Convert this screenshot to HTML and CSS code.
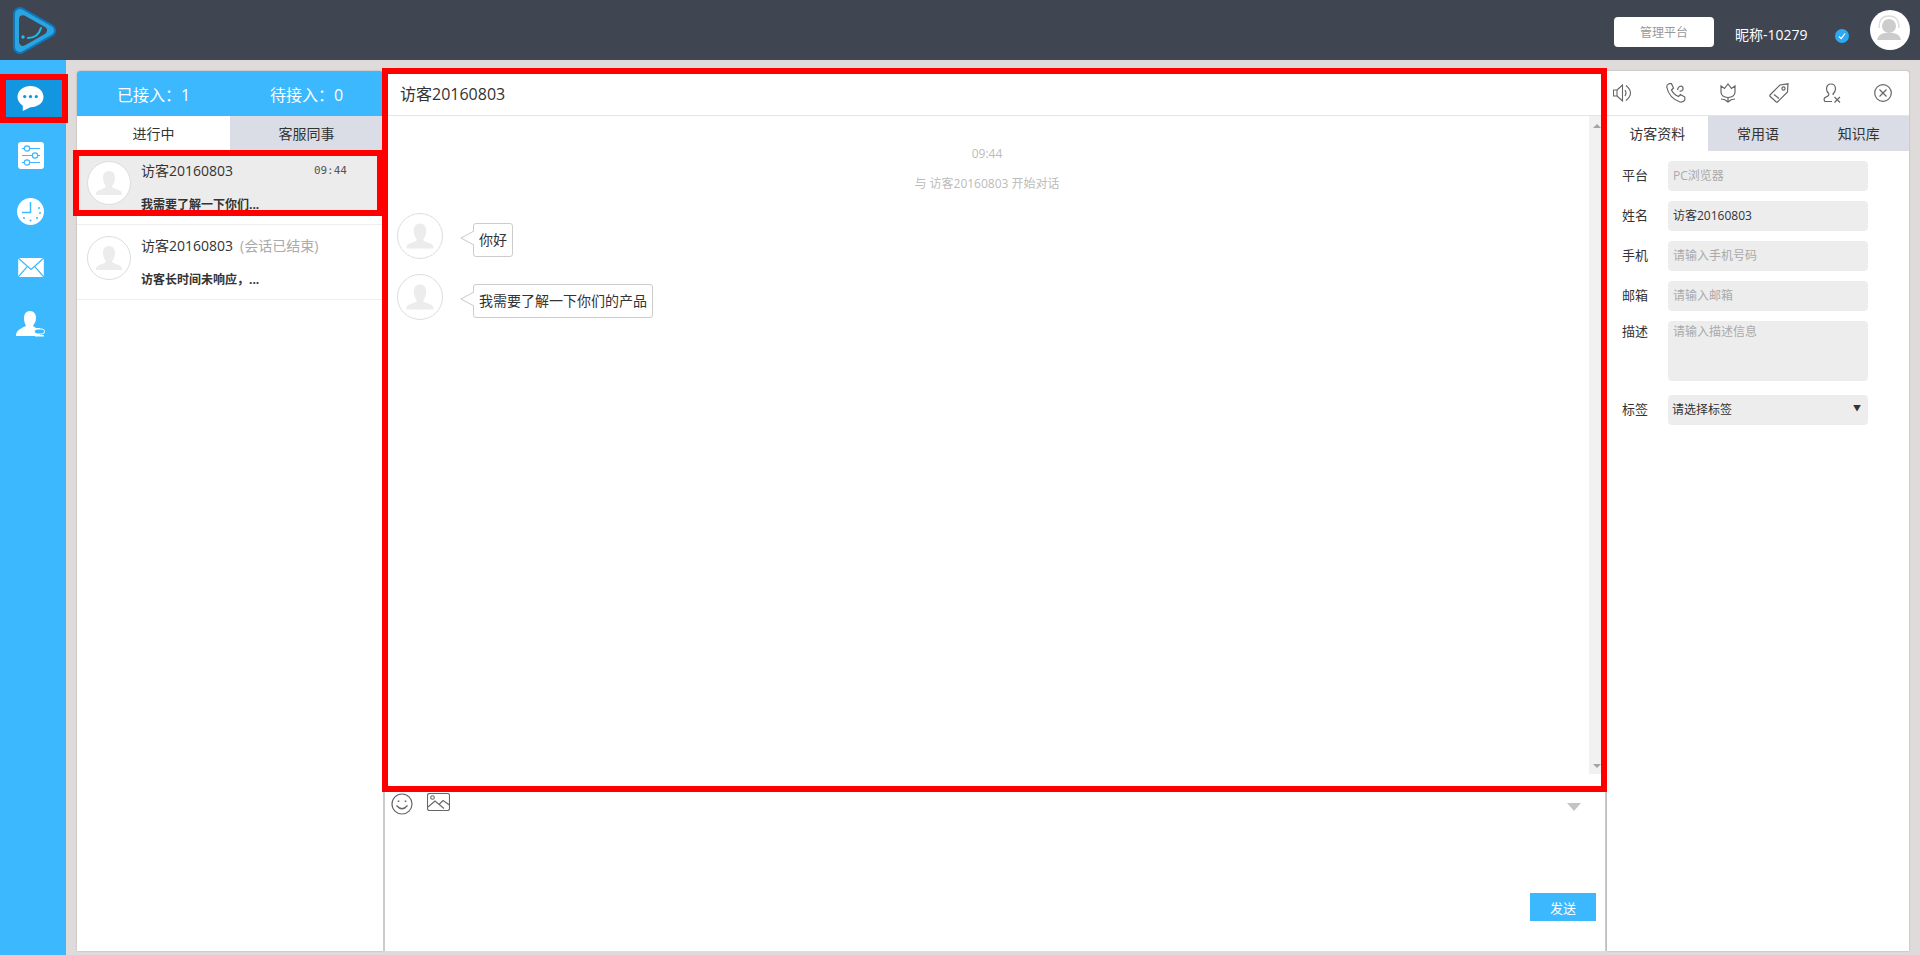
FILE: index.html
```html
<!DOCTYPE html>
<html lang="zh-CN">
<head>
    <meta charset="UTF-8">
    <title>客服工作台</title>
    <link rel="stylesheet" href="styles.css">
</head>
<body>
    <header class="topbar">
        <svg class="logo" width="46" height="50" viewBox="0 0 46 50">
            <path d="M9 9 L38 25.500 L9 42Z" fill="#0f75bc" stroke="#0f75bc" stroke-width="14" stroke-linejoin="round"/>
            <path d="M9 9 L38 25.500 L9 42Z" fill="#2aa5e0" stroke="#2aa5e0" stroke-width="10" stroke-linejoin="round"/>
            <path d="M12 14.200 L31.900 25.500 L12 36.800Z" fill="#3f4551" stroke="#3f4551" stroke-width="8" stroke-linejoin="round"/>
            <circle cx="12" cy="32" r="1.700" fill="#1cc0ee"/>
            <path d="M17 33 Q27 33 30 23" fill="none" stroke="#1cc0ee" stroke-width="2" stroke-linecap="round"/>
        </svg>
        <div class="topbar-right">
            <button class="admin-btn">管理平台</button>
            <span class="nickname">昵称-10279</span>
            <span class="status-dot">
                <svg width="10" height="10" viewBox="0 0 10 10"><path d="M2 5.500 L4.200 7.500 L8 2.500" fill="none" stroke="#fff" stroke-width="1.200"/></svg>
            </span>
            <span class="top-avatar">
                <svg width="40" height="40" viewBox="0 0 40 40">
                    <circle cx="19" cy="16" r="7" fill="#ccc"/>
                    <path d="M7 30 Q8 24 15 23 L23 23 Q30 24 31 30Z" fill="#ccc"/>
                    <path d="M9 18 Q9 6 19 6 Q29 6 29 18" fill="none" stroke="#ddd" stroke-width="1.500"/>
                </svg>
            </span>
        </div>
    </header>

    <div class="main">
        <nav class="sidenav">
            <a class="nav-item active">
                <svg width="27" height="27" viewBox="0 0 28 28">
                    <path d="M14 1 C21 1 27.500 5.500 27.500 12.500 C27.500 19 21 23 14 23 L6 27 L6 21.500 C3 19.500 .5 16.500 .5 12.500 C.5 5.500 7 1 14 1Z" fill="#fff"/>
                    <circle cx="8" cy="12" r="1.700" fill="#1296e0"/><circle cx="14" cy="12" r="1.700" fill="#1296e0"/><circle cx="20" cy="12" r="1.700" fill="#1296e0"/>
                </svg>
            </a>
            <a class="nav-item">
                <svg width="26" height="27" viewBox="0 0 26 27">
                    <rect width="26" height="27" rx="3" fill="#fff"/>
                    <g stroke="#3cb8ff" stroke-width="1.200" fill="#fff">
                        <path d="M4 6.500H22M4 13.500H22M4 20.500H22"/>
                        <circle cx="9" cy="6.500" r="2.700"/><circle cx="17" cy="13.500" r="2.700"/><circle cx="9" cy="20.500" r="2.700"/>
                    </g>
                </svg>
            </a>
            <a class="nav-item">
                <svg width="27" height="27" viewBox="0 0 27 27">
                    <circle cx="13.500" cy="13.500" r="13.500" fill="#fff"/>
                    <path d="M13.500 4V14.500H5" fill="none" stroke="#3cb8ff" stroke-width="1.500"/>
                    <g fill="#3cb8ff"><circle cx="22" cy="10" r="1"/><circle cx="23" cy="15" r="1"/><circle cx="20" cy="20" r="1"/><circle cx="13.500" cy="22.500" r="1"/><circle cx="7" cy="20" r="1"/></g>
                </svg>
            </a>
            <a class="nav-item">
                <svg width="26" height="19" viewBox="0 0 27 20">
                    <path d="M0 0H27V20H0Z" fill="#fff"/>
                    <path d="M0 0L13.500 12L27 0M0 20L9.500 9M27 20L17.500 9" fill="none" stroke="#3cb8ff" stroke-width="1.300"/>
                </svg>
            </a>
            <a class="nav-item">
                <svg width="29" height="26" viewBox="0 0 29 26">
                    <path d="M14 0 C18 0 20 3 20 7 C20 11 18 13 17 15 L20 17 L24 17 L24 25 L0 25 C0 20 3 18 10 15 C9 13 8 11 8 7 C8 3 10 0 14 0Z" fill="#fff"/>
                    <rect x="18.500" y="18" width="10" height="5" rx="2.500" fill="#3cb8ff" stroke="#fff" stroke-width="1"/>
                    <rect x="19" y="24" width="9" height="1.500" fill="#fff"/>
                </svg>
            </a>
        </nav>

        <section class="list-panel">
            <div class="list-head">
                <span>已接入：1</span>
                <span>待接入：0</span>
            </div>
            <div class="list-tabs">
                <div class="list-tab current">进行中</div>
                <div class="list-tab">客服同事</div>
            </div>
            <div class="visitor current">
                <span class="avatar">
                    <svg width="42" height="42" viewBox="0 0 42 42"><path d="M21 9 C25.500 9 27 12.500 27 16 C27 20 25 23 24 24.500 C24 27 33 27 34 31 L34 33 L8 33 L8 31 C9 27 18 27 18 24.500 C17 23 15 20 15 16 C15 12.500 16.500 9 21 9Z" fill="#ececec"/></svg>
                </span>
                <div class="visitor-body">
                    <div class="visitor-top">
                        <span class="visitor-name">访客20160803</span>
                        <span class="visitor-time">09:44</span>
                    </div>
                    <div class="visitor-msg">我需要了解一下你们...</div>
                </div>
            </div>
            <div class="visitor">
                <span class="avatar">
                    <svg width="42" height="42" viewBox="0 0 42 42"><path d="M21 9 C25.500 9 27 12.500 27 16 C27 20 25 23 24 24.500 C24 27 33 27 34 31 L34 33 L8 33 L8 31 C9 27 18 27 18 24.500 C17 23 15 20 15 16 C15 12.500 16.500 9 21 9Z" fill="#ececec"/></svg>
                </span>
                <div class="visitor-body">
                    <div class="visitor-top">
                        <span class="visitor-name">访客20160803</span>
                        <span class="visitor-ended">(会话已结束)</span>
                    </div>
                    <div class="visitor-msg">访客长时间未响应，...</div>
                </div>
            </div>
        </section>

        <section class="chat-panel">
            <div class="chat-title">访客20160803</div>
            <div class="chat-log">
                <div class="messages">
                    <div class="msg-time">09:44</div>
                    <div class="msg-time start">与 访客20160803 开始对话</div>
                    <div class="msg">
                        <span class="avatar big">
                            <svg width="44" height="44" viewBox="0 0 42 42"><path d="M21 9 C25.500 9 27 12.500 27 16 C27 20 25 23 24 24.500 C24 27 33 27 34 31 L34 33 L8 33 L8 31 C9 27 18 27 18 24.500 C17 23 15 20 15 16 C15 12.500 16.500 9 21 9Z" fill="#ececec"/></svg>
                        </span>
                        <div class="bubble">你好</div>
                    </div>
                    <div class="msg">
                        <span class="avatar big">
                            <svg width="44" height="44" viewBox="0 0 42 42"><path d="M21 9 C25.500 9 27 12.500 27 16 C27 20 25 23 24 24.500 C24 27 33 27 34 31 L34 33 L8 33 L8 31 C9 27 18 27 18 24.500 C17 23 15 20 15 16 C15 12.500 16.500 9 21 9Z" fill="#ececec"/></svg>
                        </span>
                        <div class="bubble">我需要了解一下你们的产品</div>
                    </div>
                </div>
                <div class="scrollbar">
                    <span class="arrow-up"></span>
                    <span class="arrow-down"></span>
                </div>
            </div>
            <div class="composer">
                <div class="composer-tools">
                    <svg width="22" height="22" viewBox="0 0 22 22" fill="none" stroke="#666" stroke-width="1.200">
                        <circle cx="11" cy="11" r="10"/>
                        <path d="M5.500 12.500 Q11 19 16.500 12.500" stroke-width="1.300"/>
                        <path d="M7.500 7.500V9M14.500 7.500V9" stroke-width="1.600"/>
                    </svg>
                    <svg width="23" height="19" viewBox="0 0 23 19" fill="none" stroke="#666" stroke-width="1.100">
                        <rect x=".5" y=".5" width="22" height="17" rx="2"/>
                        <circle cx="5.500" cy="4.500" r="1.800"/>
                        <path d="M1 14 L8 8 L17 15.500 M12 11.500 L16 7.500 L22.500 12"/>
                    </svg>
                    <span class="composer-toggle"></span>
                </div>
                <div class="composer-foot">
                    <button class="send-btn">发送</button>
                </div>
            </div>
        </section>

        <aside class="info-panel">
            <div class="tool-row">
                <svg width="20" height="18" viewBox="0 0 20 18" fill="none" stroke="#666" stroke-width="1.100"><path d="M.5 6H4V12H.5Z"/><path d="M4 6L9.500 1V17L4 12"/><path d="M12 6Q14 9 12 12M13 1.500Q22 9 13 16.500"/></svg>
                <svg width="20" height="20" viewBox="0 0 20 20" fill="none" stroke="#666" stroke-width="1.200"><path d="M3 .7 L5.500 .7 L7.500 5 L5.500 7 Q7 11 12.500 13.500 L14.500 11.500 L18.800 14 L18.800 17 Q17.500 19.500 14 19 Q3 15 .7 4 Q.7 1.500 3 .7Z"/><path d="M11.500 7 Q12 3.500 15 3 Q17.500 3.500 17 6.500 Q16 8.500 13.500 8"/></svg>
                <svg width="16" height="20" viewBox="0 0 16 20" fill="none" stroke="#666" stroke-width="1.200"><path d="M1 3 L4.500 5.500 L8 1 L11.500 5.500 L15 3 L15 9 Q15 14 8 14.500 Q1 14 1 9Z"/><path d="M8 14.500V19M1 16 Q5 16 8 19 Q11 16 15 16"/></svg>
                <svg width="20" height="20" viewBox="0 0 20 20" fill="none" stroke="#666" stroke-width="1.200"><path d="M1 12 L11 2 L19 .8 L18.500 9 L8.500 19 Q8 19.500 7 18.800 L1.200 13.500 Q.5 12.800 1 12Z"/><circle cx="14.500" cy="5.500" r="1.600"/><path d="M5 11.500 L10 15.500"/></svg>
                <svg width="18" height="20" viewBox="0 0 18 20" fill="none" stroke="#666" stroke-width="1.200"><path d="M8 1 C11 1 12.500 3 12.500 6 C12.500 8 11 10 10 11 L10.500 12 M6 11 C5 10 3.500 8 3.500 6 C3.500 3 5 1 8 1 M6 11 L5.500 12.500 L1.500 15 Q.5 17 2 18.500 L9 18.500"/><path d="M11.500 14 L17 19.500 M17 14 L11.500 19.500"/></svg>
                <svg width="18" height="18" viewBox="0 0 18 18" fill="none" stroke="#666" stroke-width="1.200"><circle cx="9" cy="9" r="8.300"/><path d="M5.500 5.500 L12.500 12.500 M12.500 5.500 L5.500 12.500"/></svg>
            </div>
            <div class="info-tabs">
                <div class="info-tab current">访客资料</div>
                <div class="info-tab">常用语</div>
                <div class="info-tab">知识库</div>
            </div>
            <form class="info-form">
                <div class="field"><label>平台</label><div class="control muted">PC浏览器</div></div>
                <div class="field"><label>姓名</label><div class="control">访客20160803</div></div>
                <div class="field"><label>手机</label><div class="control muted">请输入手机号码</div></div>
                <div class="field"><label>邮箱</label><div class="control muted">请输入邮箱</div></div>
                <div class="field area-field"><label>描述</label><div class="control muted area">请输入描述信息</div></div>
                <div class="field select-field"><label>标签</label><div class="control select">请选择标签<span class="caret">▼</span></div></div>
            </form>
        </aside>
    </div>

    <div class="mark mark-nav"></div>
    <div class="mark mark-visitor"></div>
    <div class="mark mark-chat"></div>
</body>
</html>
```

FILE: styles.css
```css
* {
    box-sizing: border-box;
}

html, body {
    margin: 0;
    height: 955px;
    overflow: hidden;
}

body {
    font-family: "Open Sans", "Noto Sans CJK SC", sans-serif;
    font-size: 12px;
    color: #333;
    background-color: #dfdbda;
    position: relative;
}

.topbar {
    height: 60px;
    background-color: #3f4551;
    display: flex;
    justify-content: space-between;
    align-items: center;
    padding: 0 10px 0 11px;
}

.logo {
    display: block;
}

.topbar-right {
    display: flex;
    align-items: center;
}

.admin-btn {
    width: 100px;
    height: 30px;
    margin-top: 4px;
    border: none;
    border-radius: 4px;
    background-color: #fff;
    color: #999;
    font: inherit;
    padding: 0;
}

.nickname {
    color: #fff;
    font-size: 14px;
    margin: 8px 0 0 21px;
    width: 100px;
}

.status-dot {
    width: 14px;
    height: 14px;
    border-radius: 50%;
    background-color: #2ea8f5;
    display: flex;
    align-items: center;
    justify-content: center;
    margin-top: 12px;
}

.top-avatar {
    width: 40px;
    height: 40px;
    border-radius: 50%;
    background-color: #fff;
    margin-left: 21px;
}

.top-avatar svg {
    display: block;
}

.main {
    display: flex;
    height: 895px;
}

.sidenav {
    width: 66px;
    background-color: #3cb8ff;
    padding-top: 20px;
    margin-right: 11px;
}

.nav-item {
    display: flex;
    align-items: center;
    justify-content: center;
    width: 57px;
    height: 37px;
    margin: 0 0 19px 5px;
    padding-right: 6px;
}

.nav-item.active {
    background-color: #1296e0;
    margin-bottom: 20px;
}

.list-panel {
    width: 306px;
    height: 880px;
    margin-top: 11px;
    background-color: #fff;
    border-radius: 3px 3px 0 0;
    box-shadow: 0 0 2px rgba(0, 0, 0, .25);
}

.list-head {
    height: 45px;
    background-color: #3cb8ff;
    color: #fff;
    font-size: 16px;
    display: flex;
    align-items: center;
    border-radius: 3px 3px 0 0;
}

.list-head span {
    width: 50%;
    text-align: center;
}

.list-tabs, .info-tabs {
    display: flex;
    background-color: #dadde6;
    color: #333;
    font-size: 14px;
}

.list-tab {
    width: 50%;
    height: 34px;
    line-height: 35px;
    text-align: center;
}

.list-tab.current, .info-tab.current {
    background-color: #fff;
}

.visitor {
    height: 75px;
    display: flex;
    border-bottom: 1px solid #eee;
    padding: 11px 0 0 10px;
}

.visitor.current {
    background: linear-gradient(#ececec, #ececec) no-repeat top / 100% 62px;
}

.avatar {
    width: 44px;
    height: 44px;
    border-radius: 50%;
    border: 1px solid #ddd;
    background-color: #fff;
    flex: none;
    display: block;
}

.avatar svg {
    display: block;
}

.visitor-body {
    margin-left: 10px;
    flex: 1;
}

.visitor-top {
    display: flex;
    align-items: center;
    height: 18px;
    font-size: 14px;
}

.visitor-time {
    font-family: "DejaVu Sans Mono", monospace;
    font-size: 11px;
    color: #555;
    margin: 0 36px 0 auto;
}

.visitor-ended {
    color: #aaa;
    margin-left: 7px;
}

.visitor-msg {
    margin-top: 16px;
    font-weight: bold;
    line-height: 20px;
}

.chat-panel {
    width: 1224px;
    height: 880px;
    margin-top: 11px;
    background-color: #fff;
    border-left: 2px solid #ccc;
    border-right: 2px solid #ccc;
    display: flex;
    flex-direction: column;
}

.chat-title {
    height: 45px;
    border-bottom: 1px solid #e5e5e5;
    font-size: 16px;
    line-height: 46px;
    padding-left: 15px;
}

.chat-log {
    height: 658px;
    display: flex;
}

.messages {
    flex: 1;
    padding-top: 31px;
}

.msg-time {
    color: #bbb;
    font-size: 12px;
    text-align: center;
    line-height: 14px;
    margin-bottom: 16px;
}

.msg-time.start {
    margin-bottom: 22px;
}

.msg {
    display: flex;
    padding-left: 12px;
    margin-bottom: 15px;
}

.msg .big {
    width: 46px;
    height: 46px;
}

.bubble {
    position: relative;
    margin: 10px 0 0 30px;
    height: 34px;
    line-height: 32px;
    padding: 0 5px;
    border: 1px solid #ccc;
    border-radius: 3px;
    font-size: 14px;
    background-color: #fff;
}

/* tail of the bubble: grey triangle with a white one on top */
.bubble::before, .bubble::after {
    content: "";
    position: absolute;
    top: 7px;
    width: 0;
    height: 0;
    border-top: 7px solid transparent;
    border-bottom: 7px solid transparent;
}

.bubble::before {
    left: -14px;
    border-right: 13px solid #ccc;
}

.bubble::after {
    left: -12px;
    border-right: 13px solid #fff;
}

.scrollbar {
    width: 16px;
    background-color: #f1f1f1;
    display: flex;
    flex-direction: column;
    justify-content: space-between;
    align-items: center;
    padding: 8px 0 6px;
}

.arrow-up, .arrow-down {
    width: 0;
    height: 0;
    border-left: 4px solid transparent;
    border-right: 4px solid transparent;
}

.arrow-up {
    border-bottom: 4px solid #a3a3a3;
}

.arrow-down {
    border-top: 4px solid #a3a3a3;
}

.composer {
    flex: 1;
    display: flex;
    flex-direction: column;
}

.composer-tools {
    display: flex;
    align-items: flex-start;
    gap: 14px;
    padding: 19px 0 0 6px;
}

.composer-toggle {
    margin: 10px 24px 0 auto;
    width: 0;
    height: 0;
    border-left: 7px solid transparent;
    border-right: 7px solid transparent;
    border-top: 8px solid #c4c4c4;
}

.composer-foot {
    flex: 1;
    display: flex;
    justify-content: flex-end;
    align-items: flex-end;
    padding: 0 9px 30px 0;
}

.send-btn {
    width: 66px;
    height: 28px;
    border: none;
    background-color: #3cb8ff;
    color: #fff;
    font: inherit;
    font-size: 13px;
    padding: 0;
}

.info-panel {
    width: 302px;
    height: 880px;
    margin-top: 11px;
    background-color: #fff;
    border-radius: 0 3px 0 0;
    box-shadow: 0 0 2px rgba(0, 0, 0, .25);
}

.tool-row {
    height: 45px;
    display: flex;
    align-items: center;
    justify-content: space-between;
    padding: 0 17px 0 6px;
    border-bottom: 1px solid #e5e5e5;
}

.info-tab {
    flex: 1;
    height: 35px;
    line-height: 35px;
    text-align: center;
}

.info-form {
    padding: 10px 0 0 15px;
}

.field {
    display: flex;
    margin-bottom: 10px;
}

.field label {
    width: 46px;
    font-size: 13px;
    line-height: 28px;
}

.area-field label {
    line-height: 20px;
}

.control {
    width: 200px;
    height: 30px;
    line-height: 30px;
    background-color: #ededed;
    border-radius: 4px;
    padding-left: 5px;
}

.control.muted {
    color: #aaa;
}

.control.area {
    height: 60px;
    line-height: 22px;
}

.select-field {
    margin-top: 14px;
}

.control.select {
    display: flex;
    justify-content: space-between;
    padding-left: 4px;
}

.caret {
    font-size: 8px;
    line-height: 26px;
    margin-right: 7px;
}

/* red annotation frames drawn over the screenshot */
.mark {
    position: absolute;
    border: 6px solid #f00;
    pointer-events: none;
}

.mark-nav {
    left: 0;
    top: 74px;
    width: 68px;
    height: 49px;
}

.mark-visitor {
    left: 73px;
    top: 150px;
    width: 310px;
    height: 66px;
}

.mark-chat {
    left: 382px;
    top: 68px;
    width: 1225px;
    height: 724px;
}
```
